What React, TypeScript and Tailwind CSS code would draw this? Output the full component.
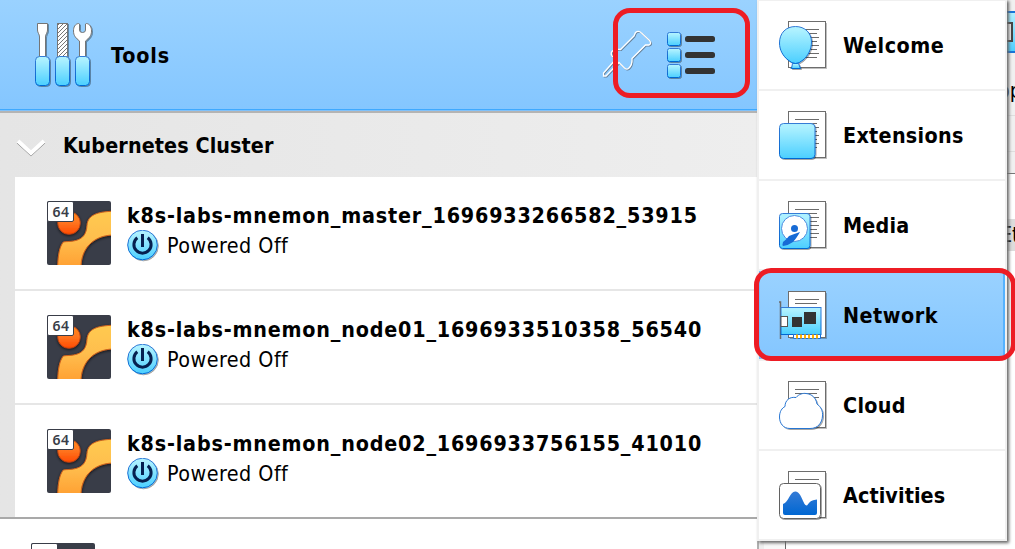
import type { ReactNode } from "react";

const BOLD = "font-['DejaVu_Sans_Condensed','DejaVu_Sans',sans-serif] font-bold [font-stretch:condensed] whitespace-nowrap text-[21.33px] leading-[32px] text-black";
const REGULAR = "font-['DejaVu_Sans_Condensed','DejaVu_Sans',sans-serif] [font-stretch:condensed] whitespace-nowrap text-[21.33px] leading-[32px] text-black";

function Defs() {
  return (
    <svg className="absolute h-0 w-0" aria-hidden="true">
      <defs>
        <linearGradient id="cyan" x1="0" y1="0" x2="0" y2="1">
          <stop offset="0.1" stopColor="#aef1ff" />
          <stop offset="1" stopColor="#4bcfff" />
        </linearGradient>
        <linearGradient id="edge" x1="0" y1="0" x2="0" y2="1">
          <stop offset="0" stopColor="#357bd6" />
          <stop offset="1" stopColor="#0067d2" />
        </linearGradient>
        <linearGradient id="gold" x1="0" y1="0" x2="0" y2="1">
          <stop offset="0" stopColor="#ffca50" />
          <stop offset="0.5" stopColor="#ffbe4e" />
          <stop offset="1" stopColor="#ffa032" />
        </linearGradient>
        <linearGradient id="ball" x1="0" y1="0" x2="0" y2="1">
          <stop offset="0" stopColor="#ff8a1e" />
          <stop offset="0.5" stopColor="#ff7420" />
          <stop offset="1" stopColor="#ff4a00" />
        </linearGradient>
        <pattern id="hatch" width="4" height="4" patternUnits="userSpaceOnUse">
          <path d="M-1 5 5 -1M-1 1 1 -1M3 5 5 3" stroke="#666" strokeWidth="0.9" />
        </pattern>
        <filter id="soft" x="-20%" y="-20%" width="150%" height="150%">
          <feDropShadow dx="1" dy="1" stdDeviation="0.6" floodColor="#000" floodOpacity="0.35" />
        </filter>
        <filter id="deep" x="-20%" y="-20%" width="150%" height="150%">
          <feDropShadow dx="0" dy="1" stdDeviation="1.5" floodColor="#000" floodOpacity="0.7" />
        </filter>
        <clipPath id="tile">
          <rect width="64" height="64" rx="2" />
        </clipPath>
      </defs>
    </svg>
  );
}

function ToolsIcon() {
  return (
    <svg width="62" height="68" viewBox="0 0 62 68" fill="none" className="shrink-0">
      <g filter="url(#soft)" stroke="#747474">
        <path d="M4.500 1.500H14.500V8C14.500 11 12.500 12 12.500 15V35H6.500V15C6.500 12 4.500 11 4.500 8Z" fill="#fff" />
        <path d="M24.500 1.500H34.500V35H24.500Z" fill="#fff" />
        <path d="M24.500 1.500H34.500V35H24.500Z" fill="url(#hatch)" />
        <path d="M45.500 1.500C42 2 40.500 5 40.500 9C40.500 14 43 16 46.500 19V35H52.500V19C56 16 58.500 14 58.500 9C58.500 5 57 2 53.500 1.500L52.500 2V8Q52.500 10.500 49.500 10.500Q46.500 10.500 46.500 8V2Z" fill="#fff" />
      </g>
      <g filter="url(#soft)" fill="url(#cyan)" stroke="url(#edge)">
        <rect x="2.500" y="34.500" width="14" height="29" rx="4" />
        <rect x="22.500" y="34.500" width="14" height="29" rx="4" />
        <rect x="42.500" y="34.500" width="14" height="29" rx="4" />
      </g>
    </svg>
  );
}

const PIN = "M43.500 12.500Q46.500 10 49.500 13L57.500 20.500Q60 23.500 57 25H53.500L40 38.500Q40.500 45 36.500 48.500Q34.500 50 32.500 48L27 42.500L14 56H11.500V53L24 39L20 36Q18 33 21 30.500Q24 29 28.500 29.500L42 16Z";

function PinIcon() {
  return (
    <svg width="60" height="66" viewBox="0 0 60 66" fill="none" className="shrink-0">
      <path d={PIN} transform="translate(.8 .8)" stroke="#667f97" strokeWidth="1.2" />
      <path d={PIN} stroke="#fff" strokeWidth="1.3" />
    </svg>
  );
}

function ListIcon() {
  return (
    <svg width="52" height="50" viewBox="0 0 52 50" className="shrink-0">
      {[2, 18, 34].map((y) => (
        <g key={y}>
          <rect x="2.500" y={y + 0.5} width="13" height="13" rx="2" fill="url(#cyan)" stroke="url(#edge)" filter="url(#soft)" />
          <rect x="20" y={y + 4} width="30" height="6" rx="2.500" fill="#333" />
        </g>
      ))}
    </svg>
  );
}

function VmIcon() {
  return (
    <svg width="64" height="64" viewBox="0 0 64 64" className="shrink-0">
      <rect width="64" height="64" rx="2" fill="#393d48" />
      <g clipPath="url(#tile)">
        <circle cx="22" cy="22" r="11.300" fill="url(#ball)" stroke="#b63c12" strokeWidth=".8" filter="url(#deep)" />
        <path d="M66 10.300C58 10.500 52 11.500 48 13.300C43 15.500 40.500 19 40 24.300C39.500 33 36 38.500 26.500 40C22.500 40.800 20 40.300 16.300 41C12.500 46 11 54 10.700 66H34C34 49 45 34.500 66 34Z" fill="url(#gold)" stroke="#d0621b" strokeWidth="1" filter="url(#deep)" />
      </g>
      <rect x=".5" y=".5" width="26" height="20" rx="1.500" fill="#fff" stroke="#393d48" />
      <text x="14" y="16" textAnchor="middle" fontFamily="Noto Sans, sans-serif" fontWeight="600" fontSize="14" letterSpacing=".5" fill="#393d48">64</text>
    </svg>
  );
}

function PowerIcon() {
  return (
    <svg width="33" height="33" viewBox="0 0 33 33" fill="none" className="shrink-0">
      <circle cx="15.500" cy="15" r="14.800" fill="url(#cyan)" stroke="url(#edge)" filter="url(#soft)" />
      <path d="M10.300 7.700A8.600 8.600 0 1 0 20.700 7.700" stroke="#062050" strokeWidth="3" />
      <path d="M15.500 4V17" stroke="#062050" strokeWidth="3" />
    </svg>
  );
}

function DocIcon({ children, lines = 8 }: { children: ReactNode; lines?: number }) {
  return (
    <svg width="50" height="50" viewBox="0 0 50 50" fill="none" className="shrink-0">
      <path d="M12 48.500H48.500V3" stroke="#000" strokeOpacity=".25" />
      <rect x="10.500" y="1.500" width="37" height="46" fill="#fff" stroke="#6d6d6d" />
      {[0, 1, 2, 3, 4, 5, 6, 7].slice(0, lines).map((i) => (
        <path key={i} d={`M17 ${9.5 + 4 * i}H${i % 2 ? 39 : 41}`} stroke="#6b6b6b" />
      ))}
      {children}
    </svg>
  );
}

const balloon = (
  <DocIcon>
    <g fill="url(#cyan)" stroke="url(#edge)" filter="url(#soft)">
      <path d="M14.500 43.500H20.500L22.500 48.500H13.500Z" />
      <path d="M1.500 23C1.500 13 8 6.500 17.500 6.500S33.500 13 33.500 22C33.500 29 30 36 25 40Q21 43.500 17.500 43.500Q14 43.500 10 40C5 36 1.500 30 1.500 23Z" />
    </g>
  </DocIcon>
);
const extension = (
  <DocIcon>
    <rect x="1.500" y="13.500" width="35.500" height="35" rx="4" fill="url(#cyan)" stroke="url(#edge)" filter="url(#soft)" />
  </DocIcon>
);
const media = (
  <DocIcon>
    <rect x="1.500" y="13.500" width="30.500" height="35" rx="3" fill="url(#cyan)" stroke="url(#edge)" filter="url(#soft)" />
    <circle cx="16.500" cy="28.500" r="13" fill="#fff" stroke="#4a8ce0" />
    <circle cx="16.500" cy="28.500" r="3.500" fill="#176bd5" />
    <path d="M22 32Q18 39 15 42Q11 45 5 46Q4 45 5 42Q9 39 11 36Q16 34 22 32Z" fill="#176bd5" />
  </DocIcon>
);
const network = (
  <DocIcon lines={2}>
    <path d="M1 12H2.500V49" stroke="#6b6b6b" strokeWidth="1.500" />
    <rect x="3" y="17.500" width="40" height="27" fill="url(#cyan)" stroke="url(#edge)" />
    <rect x="3" y="26.500" width="6.500" height="10" fill="#fff" stroke="#555" />
    <rect x="14" y="27" width="10" height="10" fill="#333" />
    <rect x="26" y="22" width="12" height="12" fill="#333" />
    <path d="M15.500 44.500H42.500V48.500H15.500Z" fill="#fff" stroke="#1a70d6" />
    <path d="M18 46.500H42" stroke="#ffb200" strokeWidth="4" strokeDasharray="2 2" />
  </DocIcon>
);
const cloud = (
  <DocIcon lines={3}>
    <path d="M12 48.500C5 48.500 1.500 43 1.500 37C1.500 31.500 4 28 7 26.500C7 20 12 16.500 18 17.500C21 14 25 13 28 13.500C34 14 38 18 39 24C43 27 45 31 44.500 36C44 43 40 48.500 32 48.500Z" fill="#fff" stroke="#2876d3" filter="url(#soft)" />
  </DocIcon>
);
const activities = (
  <DocIcon lines={1}>
    <rect x="1.500" y="13.500" width="41" height="35" rx="4" fill="#fff" stroke="#626262" filter="url(#soft)" />
    <path d="M5 34C11 32 12 21 17.500 21.500C24 22 25 36 29 35.500C33 30 35 30 39 29.500V43Q39 45 37 45H7Q5 45 5 43Z" fill="url(#edge)" />
  </DocIcon>
);

const menu: { label: string; icon: ReactNode; cls: string }[] = [
  { label: "Welcome", icon: balloon, cls: "tracking-[0.55px]" },
  { label: "Extensions", icon: extension, cls: "tracking-[0.3px]" },
  { label: "Media", icon: media, cls: "tracking-[0.2px]" },
  { label: "Network", icon: network, cls: "tracking-[0.5px]" },
  { label: "Cloud", icon: cloud, cls: "tracking-[0.3px]" },
  { label: "Activities", icon: activities, cls: "tracking-[0.1px]" },
];

const machines = [
  "k8s-labs-mnemon_master_1696933266582_53915",
  "k8s-labs-mnemon_node01_1696933510358_56540",
  "k8s-labs-mnemon_node02_1696933756155_41010",
];

function MachineRow({ name, last }: { name: string; last: boolean }) {
  return (
    <div className={`flex h-[114px] bg-white pl-8 pt-6 ${last ? "" : "border-b-2 border-[#e6e6e6]"}`}>
      <VmIcon />
      <div className="ml-4 -mt-px">
        <div className={`${BOLD} h-[30px] tracking-[0.81px]`}>{name}</div>
        <div className="flex h-[30px]">
          <PowerIcon />
          <span className={`${REGULAR} ml-[7px] tracking-[0.47px]`}>Powered Off</span>
        </div>
      </div>
    </div>
  );
}

function Sidebar() {
  return (
    <main className="flex w-[757px] shrink-0 flex-col">
      <header className="flex h-[113px] items-start border-b-2 border-[#b4b4b4] bg-linear-to-b from-[#9ad2ff] to-[#84c6ff] shadow-[inset_0_-1px_0_#7fc1fa,inset_0_-2px_0_#3fa9ff]">
        <div className="pl-[33px] pt-[22px]"><ToolsIcon /></div>
        <div className={`${BOLD} ml-4 mt-10 flex-1 tracking-[0.9px]`}>Tools</div>
        <div className="mt-5"><PinIcon /></div>
        <div className="ml-[13px] mr-10 mt-[30px]"><ListIcon /></div>
      </header>
      <section className="h-[404px] bg-linear-to-r from-[#e5e5e5] to-[#eeeeee]">
        <div className="flex h-16 pl-4 pt-[17px]">
          <svg width="30" height="36" viewBox="0 0 30 36" fill="none">
            <path d="M2 11 15 23 28 11" transform="translate(0 1)" stroke="#707070" strokeWidth="3.400" />
            <path d="M2 11 15 23 28 11" stroke="#fff" strokeWidth="4" />
          </svg>
          <h2 className={`${BOLD} ml-[17px] tracking-[0.1px]`}>Kubernetes Cluster</h2>
        </div>
        <div className="ml-[15px]">
          {machines.map((name, i) => <MachineRow key={name} name={name} last={i === 2} />)}
        </div>
      </section>
      <div className="flex h-8 items-start overflow-hidden border-t-2 border-[#a9a9a9] bg-white pl-[31px] pt-6">
        <VmIcon />
        <span className={`${BOLD} ml-4 -mt-px`}>k</span>
      </div>
    </main>
  );
}

function Details() {
  return (
    <aside className="flex flex-1 flex-col overflow-hidden bg-white">
      <div className="flex h-[174px] flex-col items-end border-b border-[#777] bg-[#f0f0f0]">
        <div className="mt-[11px] flex h-[42px] w-4 items-center border-y-2 border-[#1774d8] bg-linear-to-b from-[#aeefff] to-[#4bcfff]">
          <div className="h-5 w-[14px] border-2 border-[#444] bg-[#eee]" />
        </div>
        <div className={`${REGULAR} mt-[22px] h-8 w-[17px] overflow-hidden`}>op</div>
        <div className="mt-2 h-[37px] w-full border-y border-[#dedede]" />
      </div>
      <div className={`${REGULAR} mt-[45px] h-8 w-[15px] self-end overflow-hidden bg-[#dcdcdc]`}>Et</div>
      <div className="mt-auto flex h-[32px]">
        <div className="w-[2px] bg-[#b0b0b0]" />
        <div className="w-[5px] bg-[#eee]" />
        <div className="w-[22px] border-r border-[#666] bg-[#f8f8f8]" />
      </div>
    </aside>
  );
}

export default function App() {
  return (
    <div className="relative flex h-[549px] w-[1015px] overflow-hidden bg-white">
      <Defs />
      <Sidebar />
      <Details />
      <nav className="absolute left-[757px] top-[-1px] z-20 w-[250px] border-2 border-[#f0f0f0] bg-white shadow-[2px_2px_3px_#666]">
        {menu.map(({ label, icon, cls }, i) => (
          <div key={label} className={`flex pl-[19px] pt-[19px] ${i < 5 ? "h-[90px] border-b-2 border-[#f0f0f0]" : "h-[88px]"} ${i === 3 ? "bg-linear-to-b from-[#9ad2ff] to-[#84c6ff] shadow-[inset_1px_0_#75bfff,inset_-2px_0_#55b2ff]" : ""}`}>
            {icon}
            <span className={`${BOLD} ${cls} ml-[15px] mt-[10px]`}>{label}</span>
          </div>
        ))}
      </nav>
      <div className="absolute left-[613px] top-2 z-30 h-[90px] w-[137px] rounded-[17px] border-[5px] border-[#ed1c24]" />
      <div className="absolute left-[754px] top-[268px] z-30 h-[93px] w-[262px] rounded-[17px] border-[5px] border-[#ed1c24]" />
    </div>
  );
}
